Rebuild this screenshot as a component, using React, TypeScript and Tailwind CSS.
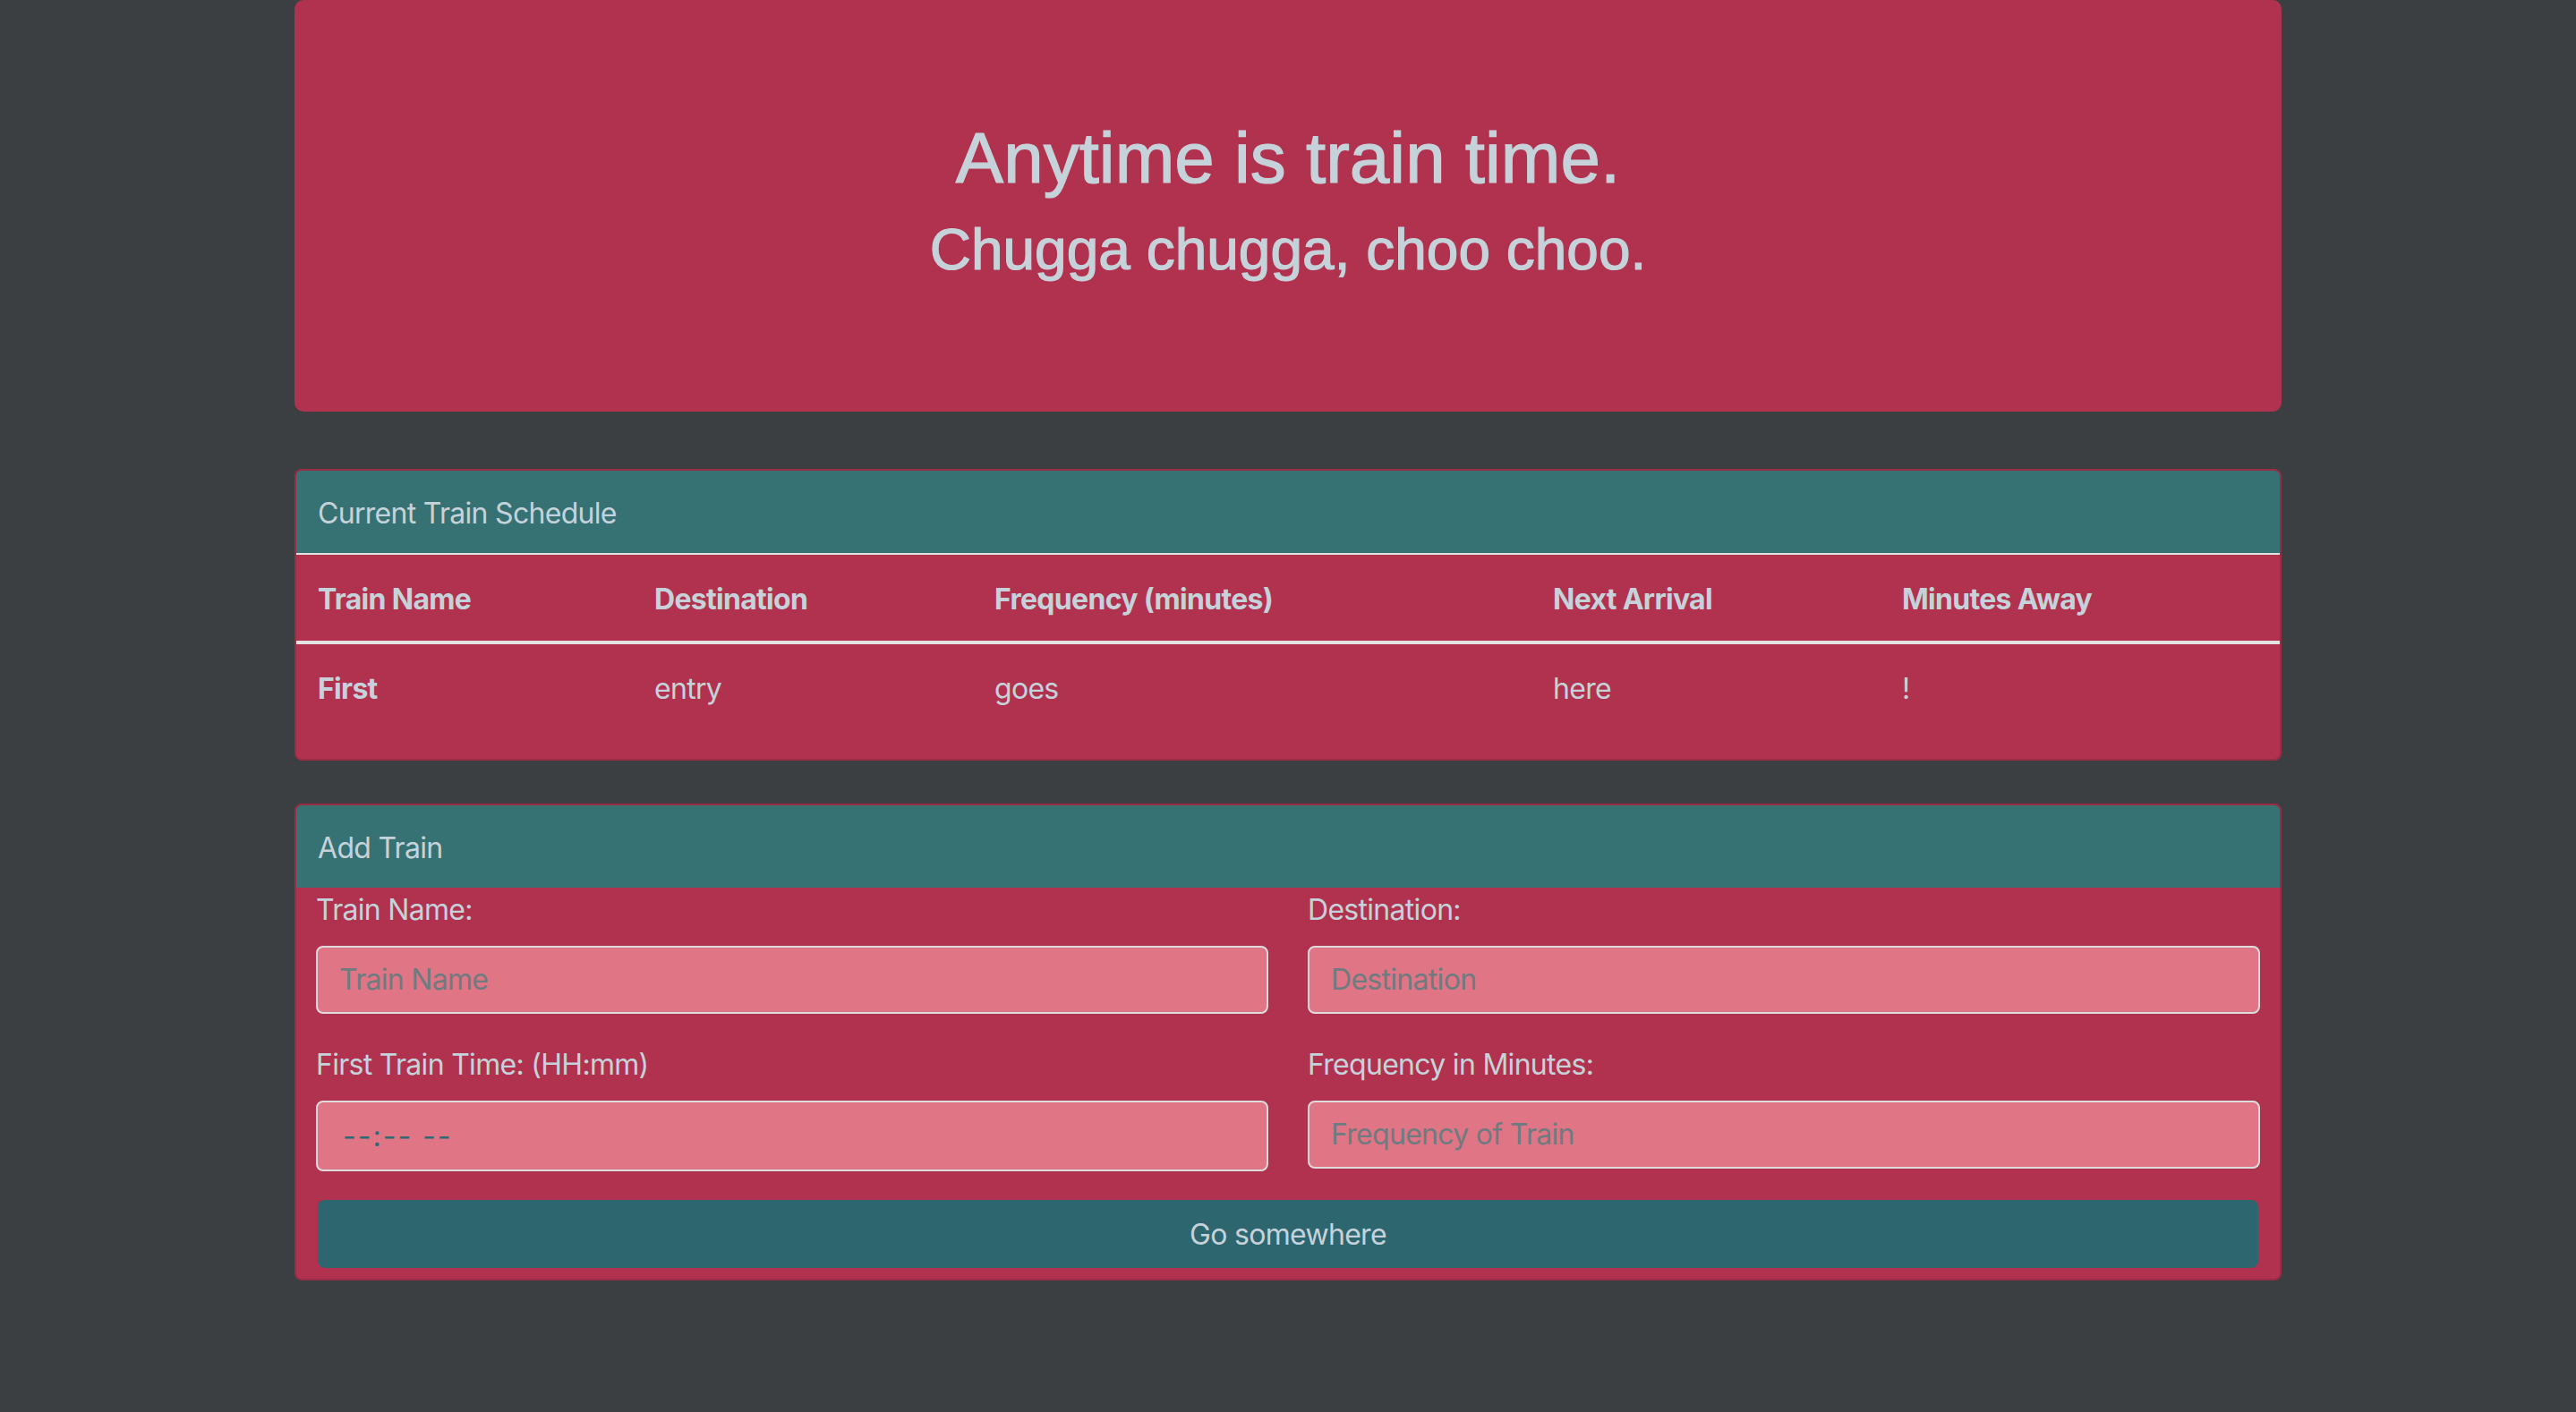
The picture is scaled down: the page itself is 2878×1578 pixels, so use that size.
const COLS = [
  { label: 'Train Name', cell: 'First', w: 'w-[376px]' },
  { label: 'Destination', cell: 'entry', w: 'w-[380px]' },
  { label: 'Frequency (minutes)', cell: 'goes', w: 'w-[624px]' },
  { label: 'Next Arrival', cell: 'here', w: 'w-[390px]' },
  { label: 'Minutes Away', cell: '!', w: 'w-[446px]' },
]

function Field({ label, placeholder, time }: { label: string; placeholder: string; time?: boolean }) {
  return (
    <div className="mb-[32px]">
      <label className="mb-[16px] block pt-[1px] leading-[48px]">{label}</label>
      <input
        className={
          time
            ? 'block h-[79px] w-full rounded-[8px] border-2 border-[#dcdcdc] bg-[#e07585] px-[28px] text-[32px] tracking-[2px] text-[#2f6a73] outline-none placeholder:text-[#2f6a73]'
            : 'block h-[76px] w-full rounded-[8px] border-2 border-[#dcdcdc] bg-[#e07585] px-[24px] text-[32px] text-[#c6d2da] outline-none placeholder:text-[#6e7b80]'
        }
        placeholder={placeholder}
        type="text"
      />
    </div>
  )
}

export default function App() {
  return (
    <div className="min-h-screen w-full bg-[#3c3f42] font-['Inter','Liberation_Sans',sans-serif] text-[32px] leading-[48px] tracking-[-0.7px] text-[#c6d2da]">
      <div className="mx-auto w-[2220px] pb-[150px]">
        {/* Jumbotron */}
        <header className="mb-[64px] rounded-[10px] bg-[#b0324e] px-[64px] pb-[126px] pt-[129px] text-center font-['Liberation_Sans',Arial,sans-serif] tracking-normal [-webkit-text-stroke:1.2px_#c6d2da]">
          <h1 className="mb-[16px] text-[80px] leading-[96px]">Anytime is train time.</h1>
          <h2 className="mb-[16px] text-[64px] leading-[76.8px]">Chugga chugga, choo choo.</h2>
        </header>

        {/* Schedule */}
        <section className="mb-[48px] overflow-hidden rounded-[8px] border-2 border-[#9a2c44] bg-[#b0324e]">
          <div className="flex h-[92px] items-center bg-[#367273] px-[24px] pt-[4px]">Current Train Schedule</div>
          <table className="mb-[32px] w-full table-fixed border-collapse text-left">
            <thead>
              <tr className="border-b-4 border-t-2 border-[#e2e2e2]">
                {COLS.map((c) => (
                  <th key={c.label} className={`${c.w} px-[24px] pb-[22px] pt-[26px] font-bold`}>
                    {c.label}
                  </th>
                ))}
              </tr>
            </thead>
            <tbody>
              <tr>
                {COLS.map((c, i) => (
                  <td key={c.label} className={`px-[24px] pb-[22px] pt-[26px] ${i === 0 ? 'font-bold' : ''}`}>
                    {c.cell}
                  </td>
                ))}
              </tr>
            </tbody>
          </table>
        </section>

        {/* Add train */}
        <section className="overflow-hidden rounded-[8px] border-2 border-[#9a2c44] bg-[#b0324e]">
          <div className="flex h-[92px] items-center bg-[#367273] px-[24px] pt-[4px]">Add Train</div>
          <form className="px-[22px] pb-[12px]">
            <div className="grid grid-cols-2 gap-x-[44px]">
              <Field label="Train Name:" placeholder="Train Name" />
              <Field label="Destination:" placeholder="Destination" />
              <Field label="First Train Time: (HH:mm)" placeholder="--:-- --" time />
              <Field label="Frequency in Minutes:" placeholder="Frequency of Train" />
            </div>
            <button
              className="mx-[2px] block h-[76px] w-[calc(100%-4px)] rounded-[8px] bg-[#2e6670] pt-[3px] text-[32px] text-[#c6d2da]"
              type="button"
            >
              Go somewhere
            </button>
          </form>
        </section>
      </div>
    </div>
  )
}
